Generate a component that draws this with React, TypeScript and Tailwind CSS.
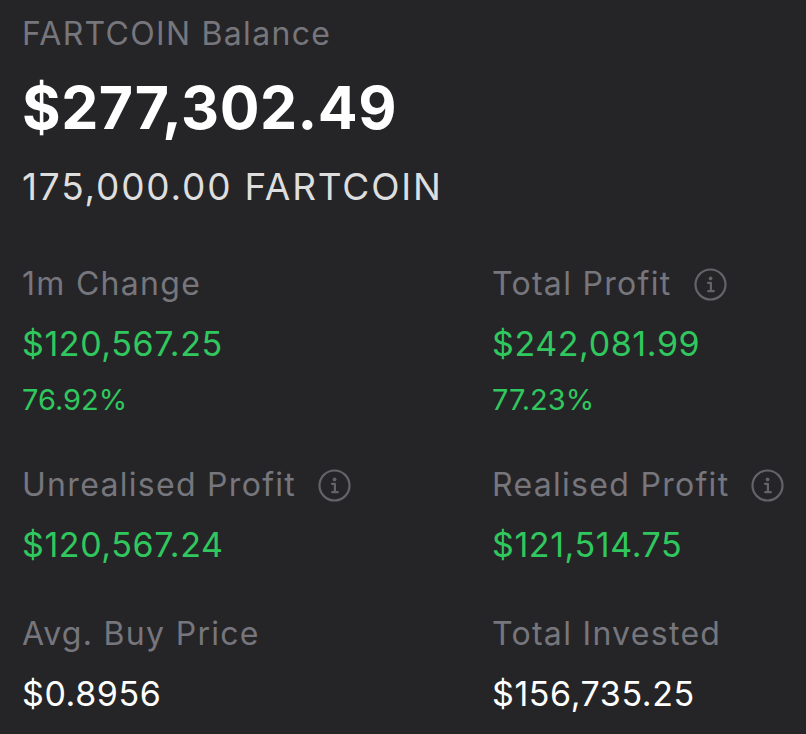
import React from 'react'

const InfoIcon = () => (
  <svg width="33" height="33" viewBox="0 0 33 33" fill="none" className="shrink-0">
    <circle cx="16.5" cy="16.5" r="15" stroke="#636368" strokeWidth="2.2" />
    <circle cx="16.6" cy="10.4" r="1.9" fill="#636368" />
    <path d="M14 14.8h2.9v8.4M14.2 23.2h5.6" stroke="#636368" strokeWidth="2.2" strokeLinecap="round" strokeLinejoin="round" />
  </svg>
)

const Stat = (props: any) => {
  return (
    <div className="flex flex-col">
      <div className="flex items-center gap-[22px] h-[36px]">
        <span className="text-[32px] leading-[36px] tracking-[1.3px] text-[#76767c]">{props.label}</span>
        {props.info && <InfoIcon />}
      </div>
      <span className={`mt-[22px] text-[34px] leading-[40px] tracking-[0.6px] ${props.white ? 'text-white' : 'text-[#30c85e]'}`}>{props.value}</span>
      {props.pct && <span className="mt-[20px] text-[29px] leading-[32px] text-[#30c85e]">{props.pct}</span>}
    </div>
  )
}

export default function App() {
  return (
    <div className="w-[806px] h-[734px] bg-[#252528] pl-[22px] pt-[16px] overflow-hidden" style={{ fontFamily: 'Inter, "Noto Sans", sans-serif' }}>
      <div className="flex flex-col">
        <span className="text-[32px] leading-[36px] tracking-[1.3px] text-[#76767c]">FARTCOIN Balance</span>
        <span className="mt-[26px] text-[59px] leading-[60px] tracking-[0.5px] font-bold text-white">$277,302.49</span>
        <span className="mt-[29px] text-[37px] leading-[40px] tracking-[1.8px] text-[#dedede]">175,000.00 FARTCOIN</span>
      </div>
      <div className="grid grid-cols-[470px_1fr] gap-y-[51px] mt-[59px]">
        <Stat label="1m Change" value="$120,567.25" pct="76.92%" />
        <Stat label="Total Profit" value="$242,081.99" pct="77.23%" info />
        <Stat label="Unrealised Profit" value="$120,567.24" info />
        <Stat label="Realised Profit" value="$121,514.75" info />
        <Stat label="Avg. Buy Price" value="$0.8956" white />
        <Stat label="Total Invested" value="$156,735.25" white />
      </div>
    </div>
  )
}
